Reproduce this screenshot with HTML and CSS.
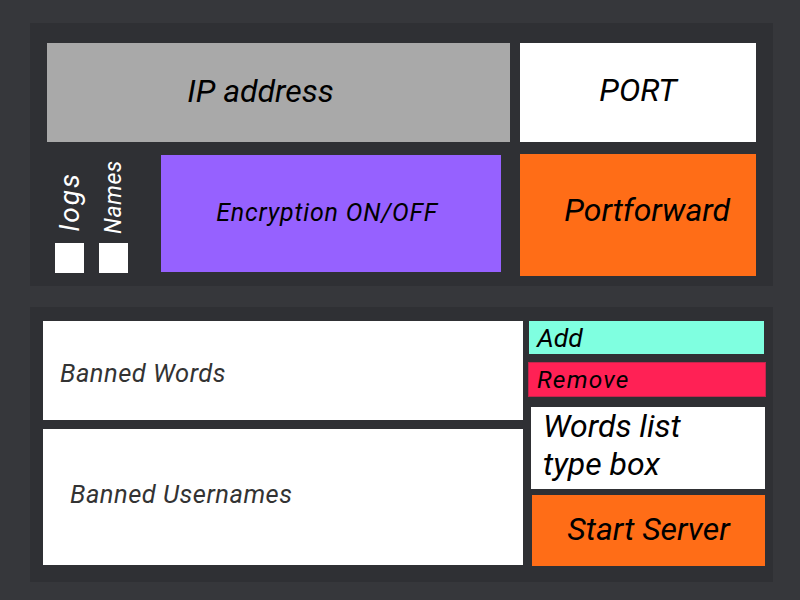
FILE: index.html
```html
<!DOCTYPE html>
<html lang="en">
<head>
    <meta charset="UTF-8">
    <meta name="viewport" content="width=device-width, initial-scale=1.0">
    <title>Chat Server Setup</title>
    <link rel="stylesheet" href="styles.css">
</head>
<body>
    <!-- Connection settings -->
    <div class="panel panel-top">
        <div class="row">
            <div class="field ip">IP address</div>
            <div class="field port">PORT</div>
        </div>
        <div class="row row-options">
            <div class="toggles">
                <div class="toggle toggle-logs">
                    <span class="toggle-label">logs</span>
                    <span class="check"></span>
                </div>
                <div class="toggle toggle-names">
                    <span class="toggle-label">Names</span>
                    <span class="check"></span>
                </div>
            </div>
            <div class="field encryption">Encryption ON/OFF</div>
            <div class="field portforward">Portforward</div>
        </div>
    </div>

    <!-- Moderation -->
    <div class="panel panel-bottom">
        <div class="lists">
            <div class="list banned-words">Banned Words</div>
            <div class="list banned-users">Banned Usernames</div>
        </div>
        <div class="actions">
            <div class="btn add">Add</div>
            <div class="btn remove">Remove</div>
            <div class="wordbox">Words list<br>type box</div>
            <div class="btn start">Start Server</div>
        </div>
    </div>
</body>
</html>
```

FILE: styles.css
```css
body {
    margin: 0;
    width: 800px;
    height: 600px;
    overflow: hidden;
    background: #36373b;
    font-family: Roboto, "Liberation Sans", sans-serif;
    font-style: italic;
    color: #000;
}
.panel {
    background: #2f3034;
    margin-left: 30px;
    width: 743px;
    box-sizing: border-box;
}
.panel-top {
    margin-top: 23px;
    height: 263px;
    padding: 20px 17px 0;
}
.panel-bottom {
    margin-top: 21px;
    height: 275px;
    padding: 14px 0 0 13px;
    display: flex;
}
.row {
    display: flex;
}
.field {
    display: flex;
    align-items: center;
    justify-content: center;
    box-sizing: border-box;
}
.ip {
    width: 463px;
    height: 99px;
    background: #a9a9a9;
    font-size: 32px;
    padding-right: 36px;
    padding-bottom: 4px;
}
.port {
    margin-left: 10px;
    width: 236px;
    height: 99px;
    background: #fff;
    font-size: 32px;
    padding-bottom: 6px;
}
.row-options {
    margin-top: 12px;
    align-items: flex-start;
}
.toggles {
    width: 114px;
    height: 119px;
    display: flex;
    gap: 15px;
    padding-left: 8px;
    box-sizing: border-box;
}
.toggle {
    width: 29px;
    height: 119px;
    display: flex;
    flex-direction: column;
    align-items: center;
    justify-content: flex-end;
}
.toggle-label {
    writing-mode: vertical-rl;
    transform: rotate(180deg);
    color: #fff;
    line-height: 1;
}
.toggle-logs .toggle-label {
    font-size: 28px;
    letter-spacing: 2px;
    margin-bottom: 12px;
}
.toggle-names .toggle-label {
    font-size: 23px;
    letter-spacing: 0.6px;
    margin-bottom: 9px;
}
.check {
    width: 29px;
    height: 30px;
    background: #fff;
    flex-shrink: 0;
}
.encryption {
    margin-top: 1px;
    width: 341px;
    height: 117px;
    background: #9661ff;
    font-size: 25px;
    letter-spacing: 0.8px;
    padding-right: 8px;
    padding-bottom: 2px;
}
.portforward {
    margin-left: 19px;
    width: 236px;
    height: 122px;
    background: #ff6d17;
    font-size: 32px;
    padding-left: 18px;
    padding-bottom: 10px;
}
.lists {
    width: 480px;
    display: flex;
    flex-direction: column;
    gap: 9px;
}
.list {
    display: flex;
    align-items: center;
    box-sizing: border-box;
    background: #fff;
    color: #333;
    font-size: 25.5px;
    letter-spacing: 0.5px;
}
.banned-words {
    height: 99px;
    padding-left: 17px;
    padding-top: 5px;
}
.banned-users {
    height: 136px;
    padding-left: 27px;
    padding-bottom: 6px;
}
.actions {
    margin-left: 6px;
    width: 237px;
    display: flex;
    flex-direction: column;
}
.btn {
    display: flex;
    align-items: center;
    box-sizing: border-box;
}
.add {
    width: 235px;
    height: 33px;
    background: #7fffe0;
    font-size: 26.5px;
    padding-left: 8px;
}
.remove {
    margin-top: 8px;
    margin-left: -1px;
    width: 238px;
    height: 35px;
    background: #ff2155;
    border: 1px solid #c4254c;
    font-size: 24.5px;
    letter-spacing: 1.2px;
    padding-left: 8px;
}
.wordbox {
    margin-top: 10px;
    margin-left: 2px;
    width: 234px;
    height: 82px;
    box-sizing: border-box;
    background: #fff;
    font-size: 32px;
    line-height: 38px;
    padding-left: 12px;
}
.start {
    margin-top: 6px;
    margin-left: 3px;
    width: 233px;
    height: 71px;
    background: #ff6d17;
    font-size: 32px;
    justify-content: center;
    padding-bottom: 3px;
}
```
